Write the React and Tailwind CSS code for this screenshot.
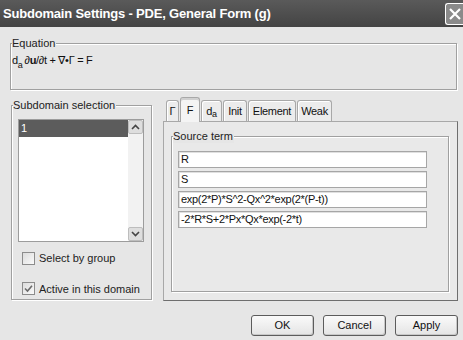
import React from 'react';

const etched = 'border border-[#a0a0a0] shadow-[inset_1px_1px_0_#ffffff,1px_1px_0_#ffffff]';

function GroupBox({ label, className, children }) {
  return (
    <div className={`relative ${etched} ${className}`}>
      <span className="absolute left-[1px] top-[-7px] bg-[#e6e6e6] pr-[1px] leading-[13px] text-[#222]">{label}</span>
      {children}
    </div>
  );
}

function Tab({ label, active, width }) {
  if (active) {
    return (
      <div className={`z-10 -mb-px flex h-[25px] ${width} items-center justify-center rounded-t-[3px] border border-b-0 border-[#a8a8a8] bg-[#f4f4f4] text-[#111] shadow-[inset_0_2px_0_#d0d0d0]`}>
        {label}
      </div>
    );
  }
  return (
    <div className={`flex h-[21px] ${width} items-center justify-center rounded-t-[3px] border border-b-0 border-[#a8a8a8] bg-[#ececec] text-[#111] shadow-[inset_1px_1px_0_#ffffff]`}>
      {label}
    </div>
  );
}

function Field({ value }) {
  return (
    <div className="flex h-[17px] w-[249px] items-center border border-[#a6a6a6] bg-white pl-[2px] tracking-[-0.3px] text-[#111] shadow-[inset_1px_1px_0_#e0e0e0]">
      {value}
    </div>
  );
}

function Check({ label, checked }) {
  return (
    <div className="flex items-center gap-[4px]">
      <div className="flex h-[13px] w-[13px] items-center justify-center border border-[#8c8c8c] bg-gradient-to-br from-[#dcdcdc] to-[#fafafa]">
        {checked && (
          <svg width="9" height="9" viewBox="0 0 9 9">
            <path d="M1 4.5 L3.5 7 L8 1.8" stroke="#6a6a6a" strokeWidth="1.6" fill="none" />
          </svg>
        )}
      </div>
      <span className="text-[11px] text-[#222]">{label}</span>
    </div>
  );
}

function Arrow({ up }) {
  return (
    <div className="flex h-[14px] w-[15px] items-center justify-center rounded-[2px] border border-[#bdbdbd] bg-[#dedede]">
      <svg width="9" height="6" viewBox="0 0 9 6">
        <path d={up ? 'M1 5 L4.5 1.5 L8 5' : 'M1 1 L4.5 4.5 L8 1'} stroke="#444" strokeWidth="1.6" fill="none" />
      </svg>
    </div>
  );
}

function Button({ label }) {
  return (
    <div className="flex h-[21px] w-[63px] items-center justify-center rounded-[3px] border border-[#5c5c5c] bg-gradient-to-b from-[#fafafa] to-[#e4e4e4] text-[11px] text-[#111] shadow-[inset_-1px_-1px_0_#c8c8c8]">
      {label}
    </div>
  );
}

export default function App() {
  return (
    <div className="flex h-[340px] w-[463px] flex-col overflow-hidden bg-[#e6e6e6] font-['Liberation_Sans',Arial,sans-serif] text-[11px]">
      <div className="flex h-[27px] items-center justify-between bg-gradient-to-b from-[#5a5a5a] to-[#444444] pl-[3px]">
        <span className="text-[13px] font-bold tracking-[-0.2px] text-white">Subdomain Settings - PDE, General Form (g)</span>
        <div className="mt-[1px] flex h-[22px] w-[18px] items-center justify-center rounded-l-[3px] border border-r-0 border-white bg-[#8a8a8a]">
          <svg width="14" height="14" viewBox="0 0 14 14">
            <path d="M2 2 L12 12 M12 2 L2 12" stroke="#ffffff" strokeWidth="2.2" />
          </svg>
        </div>
      </div>

      <GroupBox label="Equation" className="ml-[10px] mt-[16px] h-[47px] w-[447px]">
        <div className="ml-[1px] mt-[8px] flex items-baseline whitespace-pre text-[11px] tracking-[-0.3px] text-[#111]">
          <span>d</span>
          <span className="relative top-[4px] text-[9px]">a</span>
          <span className="ml-[2px]">∂</span>
          <span className="font-bold">u</span>
          <span>/∂t + ∇•Γ = F</span>
        </div>
      </GroupBox>

      <div className="mt-[7px] flex">
        <GroupBox label="Subdomain selection" className="ml-[11px] mt-[8px] h-[195px] w-[141px]">
          <div className="ml-[6px] mt-[13px] flex h-[123px] w-[126px] border border-[#9c9c9c] bg-white">
            <div className="flex-1">
              <div className="flex h-[17px] items-center bg-[#5c5c5c] pl-[2px] text-[11px] text-white">1</div>
            </div>
            <div className="flex w-[15px] flex-col justify-between bg-[#f2f2f2]">
              <Arrow up />
              <Arrow />
            </div>
          </div>
          <div className="ml-[10px] mt-[8px] flex flex-col gap-[14px]">
            <Check label="Select by group" />
            <Check label="Active in this domain" checked />
          </div>
        </GroupBox>

        <div className="ml-[11px] flex w-[295px] flex-col">
          <div className="flex h-[24px] items-end gap-[1px] pl-[3px] tracking-[-0.3px]">
            <Tab label="Γ" width="w-[13px]" />
            <Tab label="F" width="w-[20px]" active />
            <Tab label={<span>d<sub className="text-[9px]">a</sub></span>} width="w-[21px]" />
            <Tab label="Init" width="w-[24px]" />
            <Tab label="Element" width="w-[48px]" />
            <Tab label="Weak" width="w-[35px]" />
          </div>
          <div className="h-[180px] border border-[#a8a8a8] border-b-[#6e6e6e] border-r-[#6e6e6e] bg-[#e9e9e9] pl-[7px] pt-[14px]">
            <GroupBox label="Source term" className="h-[156px] w-[278px]">
              <div className="ml-[6px] mt-[14px] flex flex-col gap-[3px] text-[11px]">
                <Field value="R" />
                <Field value="S" />
                <Field value="exp(2*P)*S^2-Qx^2*exp(2*(P-t))" />
                <Field value="-2*R*S+2*Px*Qx*exp(-2*t)" />
              </div>
            </GroupBox>
          </div>
        </div>
      </div>

      <div className="mr-[5px] mt-[14px] flex justify-end gap-[9px]">
        <Button label="OK" />
        <Button label="Cancel" />
        <Button label="Apply" />
      </div>
    </div>
  );
}
